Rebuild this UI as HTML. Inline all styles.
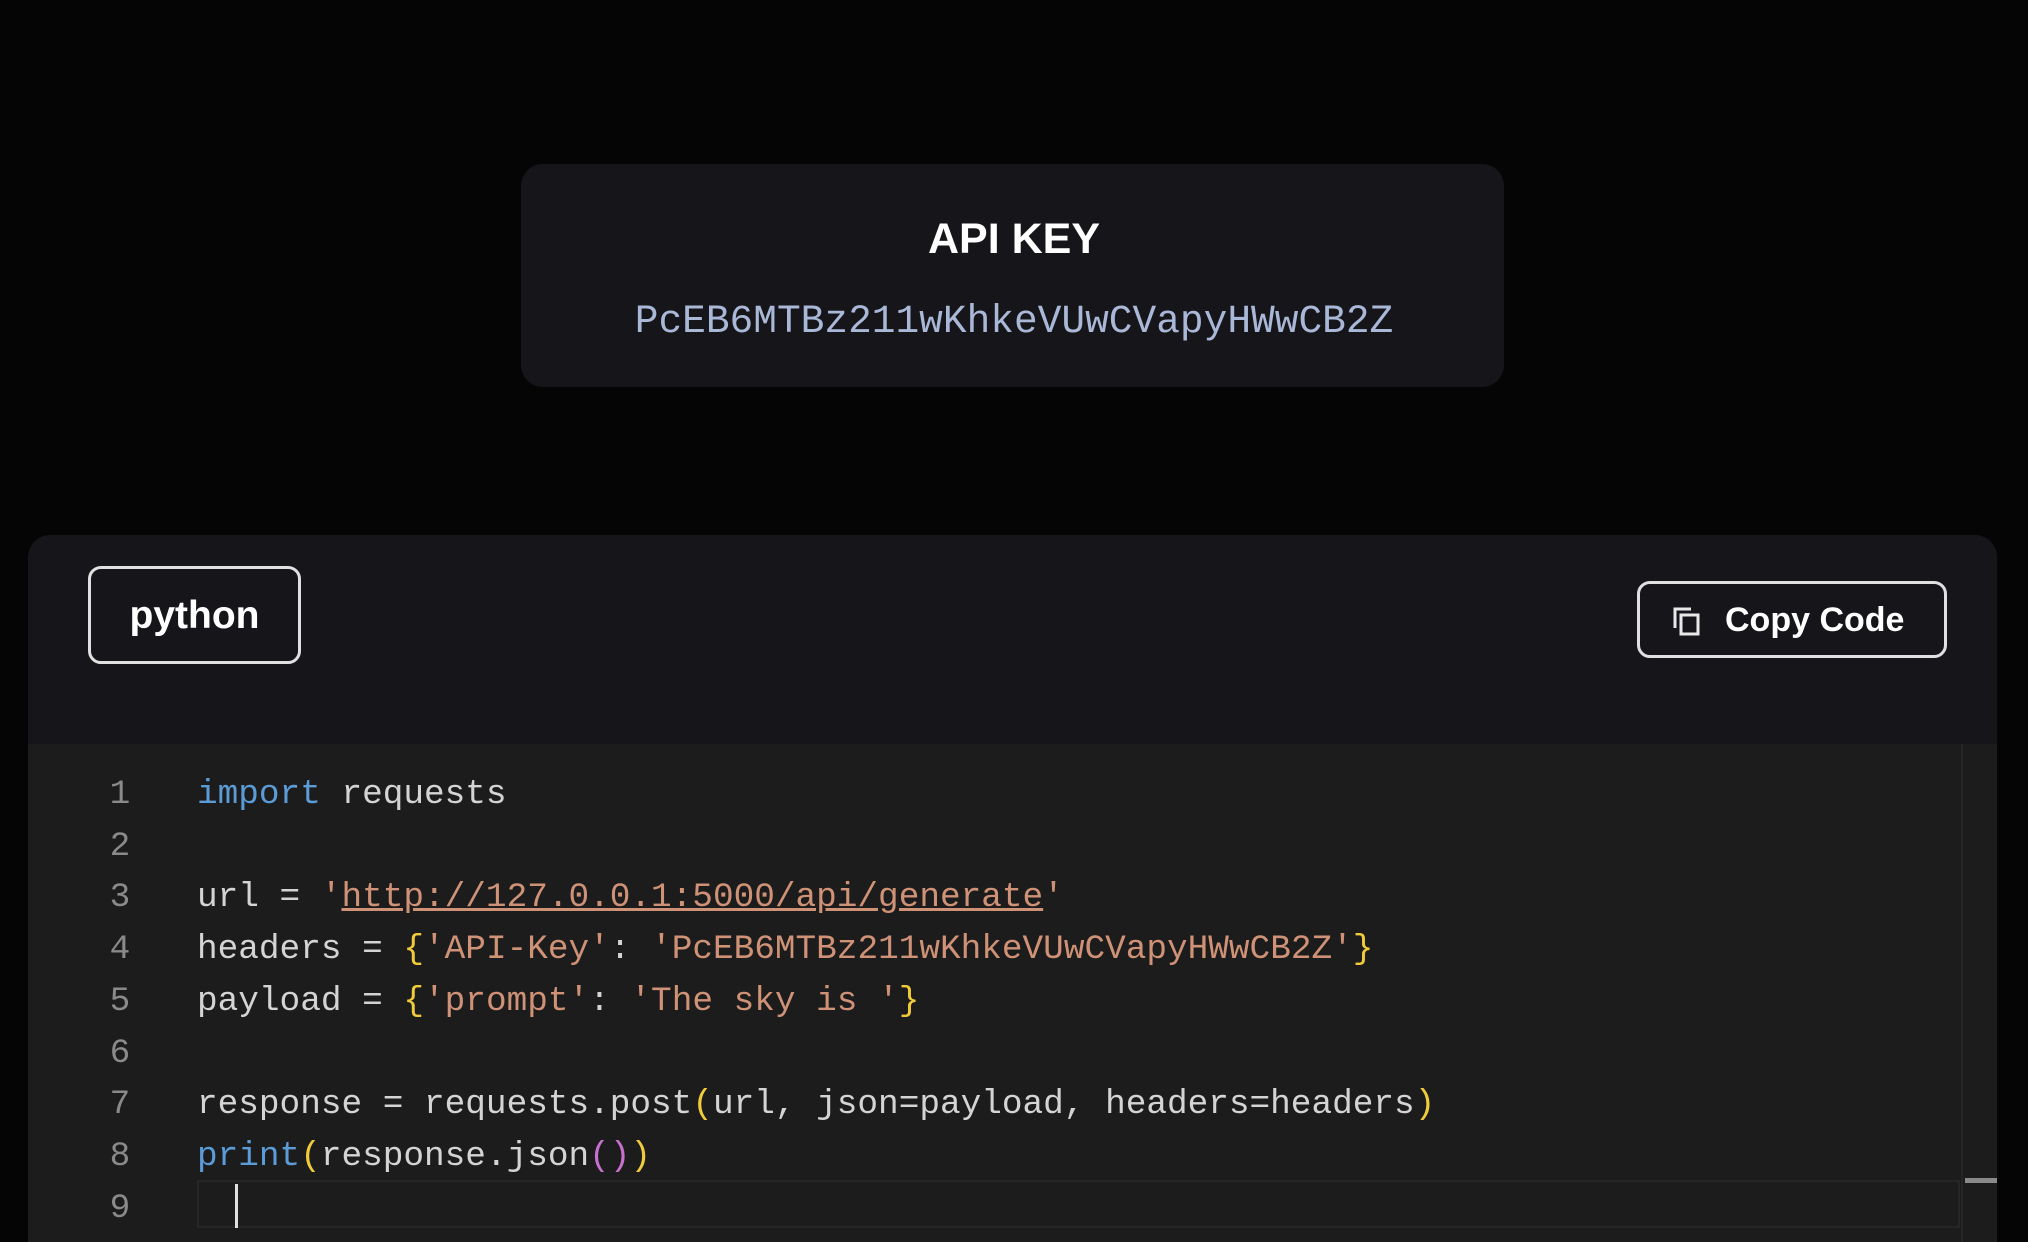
<!DOCTYPE html>
<html><head><meta charset="utf-8"><style>
html,body{margin:0;padding:0;background:#050505;width:2028px;height:1242px;overflow:hidden;font-family:"Liberation Sans",sans-serif;position:relative}
.card{position:absolute;left:521px;top:164px;width:983px;height:223px;background:#16161a;border-radius:22px}
.t{position:absolute;left:0;right:0;text-align:center;color:#fff;font-weight:bold;font-size:43px;top:214px;line-height:50px}
.k{position:absolute;left:0;right:0;text-align:center;color:#aab8d8;font-family:"Liberation Mono",monospace;font-size:39.5px;top:299px;line-height:46px}
.panel{position:absolute;left:28px;top:535px;width:1969px;height:707px;background:#16161a;border-radius:22px 22px 0 0;overflow:hidden}
.code{position:absolute;left:0;top:209px;width:1969px;height:498px;background:#1c1c1c}
.btn{position:absolute;border:3px solid #e0e0e0;border-radius:13px;color:#fff;font-weight:bold;box-sizing:border-box}
.ln{position:absolute;left:90px;width:60px;text-align:center;color:#8a8a8a;font-family:"Liberation Mono",monospace;font-size:34.4px;line-height:40px}
.cl{position:absolute;left:197px;color:#d4d4d4;font-family:"Liberation Mono",monospace;font-size:34.4px;white-space:pre;line-height:40px}
.kw{color:#5b9bd6}.s{color:#cf9277}.y{color:#f1cc3a}.p{color:#c86fd0}
</style></head><body>
<div class="card"></div>
<div class="t">API KEY</div>
<div class="k">PcEB6MTBz211wKhkeVUwCVapyHWwCB2Z</div>
<div class="panel"><div class="code"></div></div>
<div class="btn" style="left:88px;top:566px;width:213px;height:98px;font-size:39px;line-height:94px;text-align:center">python</div>
<div class="btn" style="left:1637px;top:581px;width:310px;height:77px;font-size:34px;line-height:73px">
<svg style="position:absolute;left:32px;top:22px" width="30" height="30" viewBox="0 0 30 30" fill="none" stroke="#e8e8e8" stroke-width="3"><path d="M3 22V3h16"/><rect x="9" y="9" width="17" height="19"/></svg>
<span style="position:absolute;left:85px">Copy Code</span></div>
<div style="position:absolute;left:197px;top:1180px;width:1763px;height:48px;border:2px solid #262626;box-sizing:border-box"></div>
<div style="position:absolute;left:1961px;top:744px;width:2px;height:498px;background:#262626"></div>
<div style="position:absolute;left:1965px;top:1178px;width:32px;height:5px;background:#8a8a8a"></div>
<div style="position:absolute;left:235px;top:1184px;width:3px;height:44px;background:#e0e0e0"></div>
<div class="ln" style="top:775px">1</div><div class="cl" style="top:775px"><span class="kw">import</span> requests</div>
<div class="ln" style="top:827px">2</div>
<div class="ln" style="top:878px">3</div><div class="cl" style="top:878px">url = <span class="s">'<u>http://127.0.0.1:5000/api/generate</u>'</span></div>
<div class="ln" style="top:930px">4</div><div class="cl" style="top:930px">headers = <span class="y">{</span><span class="s">'API-Key'</span>: <span class="s">'PcEB6MTBz211wKhkeVUwCVapyHWwCB2Z'</span><span class="y">}</span></div>
<div class="ln" style="top:982px">5</div><div class="cl" style="top:982px">payload = <span class="y">{</span><span class="s">'prompt'</span>: <span class="s">'The sky is '</span><span class="y">}</span></div>
<div class="ln" style="top:1034px">6</div>
<div class="ln" style="top:1085px">7</div><div class="cl" style="top:1085px">response = requests.post<span class="y">(</span>url, json=payload, headers=headers<span class="y">)</span></div>
<div class="ln" style="top:1137px">8</div><div class="cl" style="top:1137px"><span class="kw">print</span><span class="y">(</span>response.json<span class="p">()</span><span class="y">)</span></div>
<div class="ln" style="top:1189px">9</div>
</body></html>
